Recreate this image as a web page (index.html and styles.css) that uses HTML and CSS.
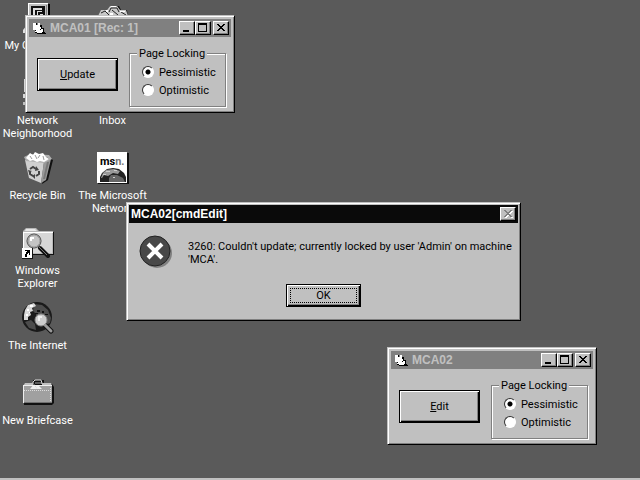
FILE: index.html
```html
<!DOCTYPE html>
<html lang="en">
<head>
  <meta charset="UTF-8">
  <meta name="viewport" content="width=device-width, initial-scale=1">
  <title>Desktop</title>
  <link rel="stylesheet" href="styles.css">
</head>
<body>

  <!-- Shared glyphs for the window title bars -->
  <svg class="symbols" aria-hidden="true">
    <symbol id="form-icon" viewBox="0 0 16 16">
      <path fill="#000" d="M9 5h2v3h2v4h1v2H6v-1H4v-1h7V9H9zM5 3h1v2H5z"/>
      <path fill="#fff" d="M2 3h3v2h2V3h2v4h1v2h2v3h-1v1H6v-1H4v-2H2z"/>
      <path fill="#000" d="M9 9h1v1H9zM4 10h1v1H4zM12 13h3v1h-3z"/>
    </symbol>
    <symbol id="minimize" viewBox="0 0 12 10">
      <path d="M2 7h6v2H2z"/>
    </symbol>
    <symbol id="maximize" viewBox="0 0 12 10">
      <path fill-rule="evenodd" d="M1 0h9v9H1zM2 2h7v6H2z"/>
    </symbol>
    <symbol id="close" viewBox="0 0 12 10">
      <path d="M2 1h2v1h1v1h2V2h1V1h2v1H9v1H8v1H7v1h1v1h1v1h1v1H8V7H7V6H5v1H4v1H2V7h1V6h1V5h1V4H4V3H3V2H2z"/>
    </symbol>
  </svg>

  <!-- Desktop -->
  <main class="desktop">

    <!-- Shortcuts, filled column by column -->
    <nav class="shortcuts">
      <a class="shortcut" href="#computer">
        <svg class="shortcut-icon" viewBox="0 0 32 32">
          <path fill="#000" d="M7 2h21v22H7z"/>
          <path fill="#c0c0c0" d="M6 1h20v21H6z"/>
          <path fill="#fff" d="M6 1h20v1H7v20H6z"/>
          <path fill="#808080" d="M24 3h1v18H9v-1h15z"/>
          <path fill="#111" d="M9 4h14v14H9z"/>
          <path fill="#ddd" d="M11 6h9v2h-7v6h-2zM15 9h5v1h-4v4h-1zM18 12h3v4h-3z"/>
          <path fill="#e0e0e0" d="M1 28l4-5h22l4 5v3H1z"/>
        </svg>
        <span>My Computer</span>
      </a>
      <a class="shortcut" href="#network">
        <svg class="shortcut-icon" viewBox="0 0 32 32">
          <path fill="#d8d8d8" d="M2 2h16v13H2zM1 17h18v4H1z"/>
          <path fill="#222" d="M4 4h12v9H4zM3 21h16v1H3z"/>
          <path fill="#c0c0c0" d="M13 10h17v13H13zM1 25h5v3H1z"/>
          <path fill="#444" d="M15 12h13v9H15z"/>
        </svg>
        <span>Network Neighborhood</span>
      </a>
      <a class="shortcut" href="#recycle">
        <svg class="shortcut-icon" viewBox="0 0 32 32">
          <path fill="#111" d="M27 6l4 2-5 20-6 4z"/>
          <path fill="#d0d0d0" d="M3 8l19 2-3 21-12-5z"/>
          <path fill="#989898" d="M22 10l7-3-5 21-5 3z"/>
          <path fill="#777" d="M25 10h2l-4 17h-2z"/>
          <path fill="#b0b0b0" d="M2 5l6-3 19 1 3 4-8 4-18-2z"/>
          <path fill="#777" d="M5 6l5-2 15 1 2 2-6 2-14-2z"/>
          <path fill="#fff" d="M4 6l4-5 3 2 2-3 4 2 4-1 3 4 3 2-5 3-4-1-3 1-4-2-3 1z"/>
          <path fill="none" stroke="#999" d="M8 4l2 3M13 3l2 4M18 3l-2 3M21 4l1 4"/>
          <path fill="none" stroke="#444" stroke-width="2" d="M8 17l3-2 3 2M17 19v3l-3 2M11 24l-3-2v-2"/>
          <path fill="#444" d="M14 14l3 4-4 1zM13 22v5l-3-3zM6 18l4 1-3 2z"/>
        </svg>
        <span>Recycle Bin</span>
      </a>
      <a class="shortcut" href="#explorer">
        <svg class="shortcut-icon" viewBox="0 0 32 32">
          <path fill="#111" d="M3 5h29v23H3z"/>
          <path fill="#b8b8b8" d="M1 4l3-3h10l3 3h14v23H1z"/>
          <path fill="#d6d6d6" d="M2 6h28v20H2z"/>
          <path fill="#fff" d="M1 5h30v1H2v20H1z"/>
          <path fill="#e8e8e8" d="M4 2h9l2 2H3z"/>
          <path stroke="#111" stroke-width="4" stroke-linecap="round" d="M18 21l8 8"/>
          <path stroke="#777" stroke-width="1" d="M17 20l8 8"/>
          <circle cx="12" cy="14" r="7" fill="#c4c4c4" stroke="#444" stroke-width="1"/>
          <circle cx="12" cy="14" r="6" fill="none" stroke="#999"/>
          <path fill="#fff" d="M8 10h4v2h-2v2H8z"/>
          <path fill="#111" d="M0 21h11v11H0z"/>
          <path fill="#fff" d="M0 21h10v10H0z"/>
          <path fill="#000" d="M3 23h5v5H7v-2H6v1H5v3H3v-3h1v-2h1v-1H3z"/>
        </svg>
        <span>Windows Explorer</span>
      </a>
      <a class="shortcut" href="#internet">
        <svg class="shortcut-icon" viewBox="0 0 32 32">
          <circle cx="15" cy="15" r="15" fill="#1a1a1a"/>
          <path fill="#4c4c4c" d="M12 2l8 1 6 5 3 8-1 5-5 2-3-4-5-1-1-6-3-3zM3 20l6-2 4 4 1 6-7-2z"/>
          <path fill="#d8d8d8" d="M6 3l6-2 2 3-4 2 1 3-3 1 1 3-3 2v3H2v-5l1-5z"/>
          <path fill="#fff" d="M8 3h3v2H8zM5 7h2v2H5zM4 12h2v2H4zM7 10h1v1H7z"/>
          <path fill="#111" d="M15 8h3v2h-3zM20 9h2v2h-2zM13 11h3v1h-3zM23 12h3v1h-3z"/>
          <path stroke="#111" stroke-width="5" stroke-linecap="round" d="M24 24l5 5"/>
          <path stroke="#999" stroke-width="3" stroke-linecap="round" d="M23 23l6 6"/>
          <circle cx="19" cy="18" r="6" fill="#ccc" stroke="#888"/>
          <path fill="#eee" d="M16 14h4v2h-2v3h-2z"/>
        </svg>
        <span>The Internet</span>
      </a>
      <a class="shortcut" href="#new-briefcase">
        <svg class="shortcut-icon" viewBox="0 0 32 32">
          <path fill="none" stroke="#111" stroke-width="2" d="M12 8V4h9v5"/>
          <path fill="none" stroke="#ddd" stroke-width="1" d="M11 8V5l2-2h6l1 3v2"/>
          <path fill="#111" d="M2 7h28l2 3v16l-2 2H2z"/>
          <path fill="#c0c0c0" d="M3 6h8v2h9V6h9l1 3H1z"/>
          <path fill="#a0a0a0" d="M1 8h29v18H1z"/>
          <path fill="#eee" d="M1 8h29v1H2v17H1zM8 12l4-5 3 5zM15 12l-2-4h3l4 4z"/>
          <path fill="none" stroke="#ddd" stroke-dasharray="1 1" d="M2 13.500h27M28.500 11v14"/>
          <path fill="#707070" d="M2 25h28v1H2z"/>
        </svg>
        <span>New Briefcase</span>
      </a>
      <a class="shortcut" href="#briefcase" aria-label="Briefcase">
        <svg class="shortcut-icon" viewBox="0 0 32 32">
          <path fill="#111" d="M5 8h5l3-4h9l2 4h6l1 8H2z"/>
          <path fill="#c8c8c8" d="M1 14l3-6h6l3-4h7l3 4h6l2 6v14H1z"/>
          <path fill="none" stroke="#222" d="M4 11l4-2 4 4M12 10l2-4h6l2 4M15 8l6 5M24 10l5 3"/>
          <path fill="#fff" d="M9 8h2v2H9zM14 4h5v1h-5zM23 9h5v1h-5zM13 11h3v2h-3z"/>
        </svg>
      </a>
      <a class="shortcut" href="#inbox">
        <svg class="shortcut-icon" viewBox="0 0 32 32">
          <path fill="#111" d="M2 9h29v21H2z"/>
          <path fill="#c8c8c8" d="M1 12l4-8h22l3 8v17H1z"/>
          <path fill="#fff" d="M6 5h19v10H6z"/>
          <path fill="#808080" d="M1 15h8l2 4h9l2-4h8v14H1z"/>
        </svg>
        <span>Inbox</span>
      </a>
      <a class="shortcut" href="#msn">
        <svg class="shortcut-icon" viewBox="0 0 32 32">
          <path fill="#111" d="M1 1h31v31H1z"/>
          <path fill="#fff" d="M0 0h30v31H0z"/>
          <path fill="#222" d="M3 30v-5l2-4 5-4 6-1 6 1 5 4 2 4v5z"/>
          <path fill="#999" d="M9 18l8-1 6 2-2 3-5-1-5 3-4-1-2 3H4l2-5z"/>
          <path fill="#666" d="M14 23h6l6 3 2 4H12v-4z"/>
          <path fill="#ccc" d="M9 19h4v1H9zM17 18h3v1h-3zM6 22h3v1H6zM16 25h2v1h-2z"/>
          <text class="msn-name" x="3" y="13">ms<tspan fill="#777">n.</tspan></text>
        </svg>
        <span>The Microsoft Network</span>
      </a>
    </nav>

    <!-- First form -->
    <section class="window form-one">
      <header class="title-bar">
        <svg class="title-icon"><use href="#form-icon"/></svg>
        <h2 class="title">MCA01 [Rec: 1]</h2>
        <button class="title-button" type="button" aria-label="Minimize"><svg><use href="#minimize"/></svg></button>
        <button class="title-button" type="button" aria-label="Maximize"><svg><use href="#maximize"/></svg></button>
        <button class="title-button close" type="button" aria-label="Close"><svg><use href="#close"/></svg></button>
      </header>
      <form class="form-body">
        <button class="command" type="button"><u>U</u>pdate</button>
        <fieldset class="locking">
          <legend>Page Locking</legend>
          <label class="option"><input type="radio" name="locking" checked>Pessimistic</label>
          <label class="option"><input type="radio" name="locking">Optimistic</label>
        </fieldset>
      </form>
    </section>

    <!-- Second form -->
    <section class="window form-two">
      <header class="title-bar">
        <svg class="title-icon"><use href="#form-icon"/></svg>
        <h2 class="title">MCA02</h2>
        <button class="title-button" type="button" aria-label="Minimize"><svg><use href="#minimize"/></svg></button>
        <button class="title-button" type="button" aria-label="Maximize"><svg><use href="#maximize"/></svg></button>
        <button class="title-button close" type="button" aria-label="Close"><svg><use href="#close"/></svg></button>
      </header>
      <form class="form-body">
        <button class="command" type="button"><u>E</u>dit</button>
        <fieldset class="locking">
          <legend>Page Locking</legend>
          <label class="option"><input type="radio" name="locking" checked>Pessimistic</label>
          <label class="option"><input type="radio" name="locking">Optimistic</label>
        </fieldset>
      </form>
    </section>

    <!-- Error message -->
    <section class="window message" role="alertdialog" aria-labelledby="message-title">
      <header class="title-bar active">
        <h2 class="title" id="message-title">MCA02[cmdEdit]</h2>
        <button class="title-button close" type="button" aria-label="Close" disabled><svg><use href="#close"/></svg></button>
      </header>
      <div class="message-body">
        <svg class="stop-icon" viewBox="0 0 34 34">
          <circle cx="18" cy="18" r="15" fill="#808080"/>
          <circle cx="16" cy="16" r="15" fill="#484848" stroke="#222"/>
          <path stroke="#fff" stroke-width="4" d="M9 9l14 14M23 9L9 23"/>
        </svg>
        <p>3260: Couldn't update; currently locked by user 'Admin' on machine 'MCA'.</p>
      </div>
      <button class="ok" type="button"><span>OK</span></button>
    </section>

  </main>
  <!-- End of Desktop -->

  <!-- Top edge of the hidden taskbar -->
  <footer class="taskbar"></footer>

</body>
</html>
```

FILE: styles.css
```css
* {
  box-sizing: border-box;
}

body {
  background-color: #5a5a5a;
  color: #000;
  display: flex;
  flex-direction: column;
  font-family: Roboto, "Liberation Sans", Arial, sans-serif;
  font-size: 11px;
  line-height: 13px;
  margin: 0;
  min-height: 100vh;
}

button {
  color: inherit;
  font: inherit;
  padding: 0;
}

.symbols {
  display: none;
}

.desktop {
  flex: 1;
  position: relative;
}

.taskbar {
  background-color: #c0c0c0;
  height: 2px;
}

/* Shortcuts */

.shortcuts {
  display: grid;
  grid-auto-flow: column;
  grid-template-columns: 75px 75px;
  grid-template-rows: repeat(6, 75px);
  justify-content: start;
  padding-top: 2px;
}

.shortcut {
  align-items: center;
  color: #fff;
  display: flex;
  flex-direction: column;
  gap: 5px;
  text-align: center;
  text-decoration: none;
}

.shortcut-icon {
  height: 32px;
  width: 32px;
}

.msn-name {
  font-size: 11px;
  font-weight: bold;
}

/* Windows */

.window {
  background-color: #c0c0c0;
  border: 1px solid;
  border-color: #c0c0c0 #000 #000 #c0c0c0;
  box-shadow: inset 1px 1px #fff, inset -1px -1px #808080;
  padding: 3px;
  position: absolute;
}

.form-one {
  left: 25px;
  top: 15px;
  width: 210px;
}

.form-two {
  left: 387px;
  top: 347px;
  width: 210px;
}

.message {
  left: 126px;
  padding: 2px;
  top: 202px;
  width: 395px;
}

.title-bar {
  align-items: center;
  background-color: #808080;
  color: #c0c0c0;
  display: flex;
  height: 18px;
  padding: 0 2px;
}

.title-bar.active {
  background-color: #0a0a0a;
  color: #fff;
}

.title-icon {
  height: 16px;
  margin-right: 3px;
  width: 16px;
}

.title {
  flex: 1;
  font-family: "Liberation Sans", Arial, sans-serif;
  font-size: 12px;
  margin: 0;
}

.title-button {
  background-color: #c0c0c0;
  border: 1px solid;
  border-color: #fff #000 #000 #fff;
  box-shadow: inset -1px -1px #808080;
  color: #000;
  height: 14px;
  width: 16px;
}

.title-button.close {
  margin-left: 2px;
}

.title-button svg {
  display: block;
  fill: currentColor;
  height: 10px;
  margin: 1px;
  shape-rendering: crispEdges;
  width: 12px;
}

.title-button:disabled {
  color: #808080;
}

.title-button:disabled svg {
  filter: drop-shadow(1px 1px #fff);
}

/* Form contents */

.form-body {
  align-items: flex-start;
  display: flex;
  gap: 11px;
  padding: 10px 5px 2px 8px;
}

.command {
  background-color: #c0c0c0;
  border: 1px solid #000;
  box-shadow: inset 1px 1px #fff, inset -1px -1px #000, inset -2px -2px #808080;
  height: 33px;
  margin-top: 11px;
  width: 81px;
}

.locking {
  border: 1px solid #808080;
  box-shadow: 1px 1px #fff, inset 1px 1px #fff;
  flex: 1;
  margin: 0;
  min-width: 0;
  padding: 3px 6px 7px 12px;
}

.locking legend {
  background-color: #c0c0c0;
  margin-left: -5px;
  padding: 0 2px;
}

.option {
  align-items: center;
  display: flex;
  gap: 5px;
  height: 18px;
}

.option input {
  appearance: none;
  background-color: #fff;
  border: 1px solid;
  border-color: #333 #fff #fff #333;
  border-radius: 50%;
  height: 12px;
  margin: 0;
  width: 12px;
}

.option input:checked {
  background-image: radial-gradient(circle, #000 2px, transparent 3px);
}

/* Message box */

.message-body {
  display: flex;
  gap: 15px;
  padding: 12px 0 0 10px;
}

.message-body p {
  margin: 5px 0 0;
}

.stop-icon {
  flex: none;
  height: 34px;
  width: 34px;
}

.ok {
  background-color: #c0c0c0;
  border: 1px solid #000;
  box-shadow: inset 1px 1px #fff, inset -1px -1px #000, inset -2px -2px #808080;
  display: block;
  height: 23px;
  margin: 15px auto 11px;
  padding: 3px;
  width: 75px;
}

.ok span {
  border: 1px dotted #000;
  display: block;
  line-height: 13px;
}
```
